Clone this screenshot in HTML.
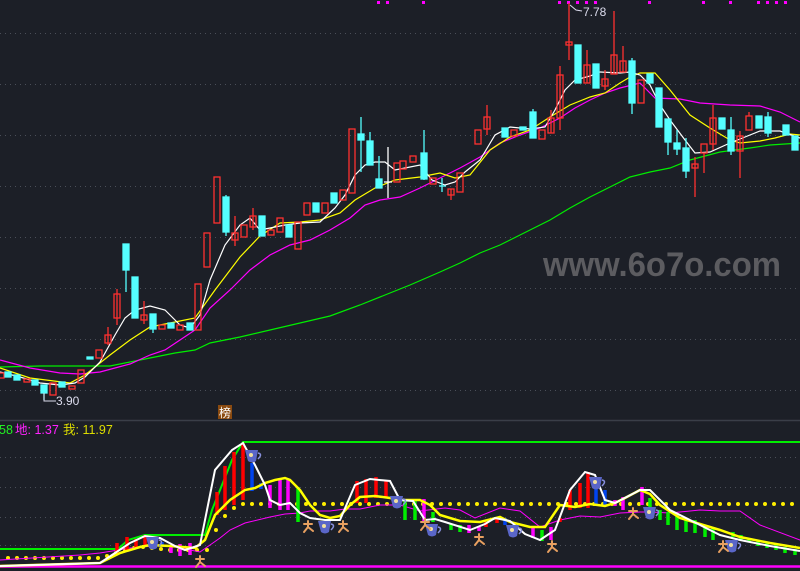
<!DOCTYPE html>
<html><head><meta charset="utf-8"><style>
html,body{margin:0;padding:0;background:#1c1f27;width:800px;height:571px;overflow:hidden}
svg{display:block}
text{font-family:"Liberation Sans","Noto Sans CJK SC",sans-serif}
</style></head><body>
<svg width="800" height="571" viewBox="0 0 800 571" xmlns="http://www.w3.org/2000/svg">
<rect width="800" height="571" fill="#1c1f27"/>
<g stroke="#4a4e58" stroke-width="1" stroke-dasharray="1,4">
<line x1="0" y1="33.5" x2="800" y2="33.5"/><line x1="0" y1="84.5" x2="800" y2="84.5"/>
<line x1="0" y1="135.5" x2="800" y2="135.5"/><line x1="0" y1="186.5" x2="800" y2="186.5"/>
<line x1="0" y1="237.5" x2="800" y2="237.5"/><line x1="0" y1="288.5" x2="800" y2="288.5"/>
<line x1="0" y1="339.5" x2="800" y2="339.5"/><line x1="0" y1="390.5" x2="800" y2="390.5"/>
<line x1="0" y1="457.5" x2="800" y2="457.5"/><line x1="0" y1="487.5" x2="800" y2="487.5"/>
<line x1="0" y1="517.5" x2="800" y2="517.5"/><line x1="0" y1="545.5" x2="800" y2="545.5"/>
</g>
<line x1="0" y1="420.5" x2="800" y2="420.5" stroke="#3a3e48" stroke-width="1.5"/>
<text x="543" y="276" font-size="34" font-weight="bold" fill="#5c5c60" textLength="238" lengthAdjust="spacingAndGlyphs">www.6o7o.com</text>
<g fill="#ff00ff">
<rect x="377" y="1" width="3" height="3"/><rect x="386" y="1" width="3" height="3"/><rect x="422" y="1" width="3" height="3"/>
<rect x="558" y="1" width="3" height="3"/><rect x="567" y="1" width="3" height="3"/><rect x="576" y="1" width="3" height="3"/><rect x="585" y="1" width="3" height="3"/><rect x="594" y="1" width="3" height="3"/>
<rect x="648" y="1" width="3" height="3"/><rect x="702" y="1" width="3" height="3"/><rect x="729" y="1" width="3" height="3"/>
<rect x="757" y="1" width="3" height="3"/><rect x="766" y="1" width="3" height="3"/><rect x="775" y="1" width="3" height="3"/><rect x="784" y="1" width="3" height="3"/>
</g>
<g fill="none" stroke-width="1.2">
<polyline stroke="#00ee00" points="0,367 40,366 90,366 110,366 130,362 150,358 175,353 195,350 210,343 240,337 270,330 300,323 330,316 360,305 385,295 410,285 440,272 460,263 480,253 500,245 520,235 550,220 570,208 590,197 610,187 630,177 650,172 670,168 690,160 720,152 750,148 770,145 800,143"/>
<polyline stroke="#ff00ff" points="0,360 30,368 60,373 80,374 100,372 115,368 130,364 150,355 165,350 180,340 195,330 210,308 230,290 250,270 270,255 290,245 310,240 330,230 350,218 365,205 380,200 400,197 420,188 440,178 460,168 480,157 500,143 520,135 540,128 560,118 575,108 590,100 605,93 620,88 640,83 655,98 680,99 700,103 730,105 760,106 780,112 800,122"/>
<polyline stroke="#ffff00" points="0,368 30,378 70,383 85,375 110,355 130,340 150,327 170,323 195,318 215,290 240,257 260,236 280,223 300,222 320,220 340,213 355,200 375,188 395,180 420,177 440,173 455,178 470,175 490,150 510,137 530,130 550,117 570,105 590,97 605,93 620,83 630,77 640,73 655,73 670,90 690,115 710,128 730,140 740,143 760,141 775,138 790,134 800,135"/>
<polyline stroke="#ffffff" points="0,372 20,377 40,383 60,385 75,383 85,377 100,362 115,335 125,318 135,310 150,306 165,310 180,325 190,328 200,315 210,280 225,245 240,225 250,218 260,230 270,228 285,225 300,223 320,222 335,208 345,195 355,175 365,165 375,162 385,162 395,170 405,168 420,165 432,180 445,185 455,182 465,172 480,160 495,135 510,127 530,129 545,127 555,110 565,90 575,80 590,76 600,72 620,73 630,72 640,75 650,85 660,105 670,120 685,140 695,153 710,152 730,143 745,137 760,131 780,131 800,138"/>
</g>
<g stroke-width="1.3">
<g stroke="#ff3030" fill="none">
<rect x="-2" y="373" width="6" height="5"/><rect x="24" y="379" width="6" height="3"/><rect x="50" y="383" width="6" height="12"/><rect x="69" y="386" width="6" height="3"/>
<rect x="78" y="370" width="6" height="13"/><rect x="96" y="350" width="6" height="8"/><rect x="105" y="335" width="6" height="8"/><line x1="108" y1="327" x2="108" y2="345"/>
<rect x="114" y="294" width="6" height="24"/><line x1="117" y1="289" x2="117" y2="325"/><rect x="141" y="315" width="6" height="5"/><line x1="144" y1="301" x2="144" y2="324"/>
<rect x="159" y="325" width="6" height="4"/><rect x="177" y="325" width="6" height="5"/><rect x="195" y="284" width="6" height="46"/><rect x="204" y="233" width="6" height="34"/>
<rect x="214" y="177" width="6" height="46"/><rect x="232" y="233" width="6" height="7"/><line x1="235" y1="216" x2="235" y2="246"/><rect x="241" y="225" width="6" height="12"/>
<rect x="250" y="216" width="6" height="11"/><line x1="253" y1="208" x2="253" y2="230"/><rect x="268" y="230" width="6" height="5"/><rect x="277" y="218" width="6" height="14"/>
<rect x="295" y="222" width="6" height="27"/><rect x="304" y="203" width="6" height="12"/><rect x="322" y="203" width="6" height="10"/><rect x="340" y="190" width="6" height="10"/>
<rect x="349" y="129" width="6" height="64"/><rect x="394" y="163" width="6" height="19"/><rect x="400" y="161" width="6" height="8"/><rect x="410" y="156" width="6" height="6"/>
<rect x="430" y="178" width="6" height="6"/><rect x="448" y="189" width="6" height="6"/><line x1="451" y1="189" x2="451" y2="200"/><rect x="457" y="173" width="6" height="19"/>
<rect x="475" y="130" width="6" height="14"/><rect x="484" y="117" width="6" height="12"/><line x1="487" y1="105" x2="487" y2="135"/><rect x="511" y="130" width="6" height="6"/>
<rect x="539" y="130" width="6" height="9"/><rect x="548" y="118" width="6" height="15"/><line x1="551" y1="110" x2="551" y2="133"/><rect x="557" y="75" width="6" height="43"/><line x1="560" y1="66" x2="560" y2="130"/>
<rect x="566" y="42" width="6" height="3"/><line x1="569" y1="3" x2="569" y2="60"/><rect x="584" y="65" width="6" height="18"/><line x1="587" y1="50" x2="587" y2="83"/>
<rect x="602" y="79" width="6" height="7"/><line x1="605" y1="70" x2="605" y2="90"/><rect x="611" y="55" width="6" height="19"/><line x1="614" y1="11" x2="614" y2="74"/>
<rect x="620" y="61" width="6" height="11"/><line x1="623" y1="46" x2="623" y2="72"/><rect x="638" y="80" width="6" height="23"/><rect x="692" y="164" width="6" height="4"/><line x1="695" y1="157" x2="695" y2="197"/>
<rect x="701" y="144" width="6" height="9"/><line x1="704" y1="153" x2="704" y2="173"/><rect x="710" y="118" width="6" height="26"/><line x1="713" y1="105" x2="713" y2="150"/>
<rect x="737" y="136" width="6" height="15"/><line x1="740" y1="131" x2="740" y2="178"/><rect x="746" y="116" width="6" height="14"/><line x1="749" y1="112" x2="749" y2="116"/>
</g>
<g fill="#55ffff" stroke="#55ffff">
<rect x="5" y="372" width="6" height="5"/><rect x="14" y="375" width="6" height="5"/><rect x="32" y="380" width="6" height="5"/><rect x="41" y="385" width="6" height="8"/><line x1="44" y1="385" x2="44" y2="400"/>
<rect x="59" y="382" width="6" height="5"/><rect x="87" y="357" width="6" height="2"/><rect x="123" y="244" width="6" height="26"/><line x1="126" y1="244" x2="126" y2="292"/>
<rect x="132" y="277" width="6" height="41"/><rect x="150" y="314" width="6" height="15"/><line x1="153" y1="314" x2="153" y2="333"/><rect x="168" y="323" width="6" height="5"/><rect x="187" y="323" width="6" height="7"/>
<rect x="223" y="197" width="6" height="35"/><line x1="226" y1="195" x2="226" y2="236"/><rect x="259" y="216" width="6" height="20"/><rect x="286" y="225" width="6" height="12"/>
<rect x="313" y="203" width="6" height="9"/><rect x="331" y="193" width="6" height="10"/><rect x="358" y="134" width="6" height="6"/><line x1="361" y1="117" x2="361" y2="172"/>
<rect x="367" y="141" width="6" height="24"/><line x1="370" y1="132" x2="370" y2="165"/><rect x="376" y="179" width="6" height="9"/><line x1="379" y1="156" x2="379" y2="188"/>
<rect x="421" y="153" width="6" height="26"/><line x1="424" y1="130" x2="424" y2="180"/><line x1="439" y1="186" x2="446" y2="186"/><line x1="442" y1="178" x2="442" y2="192"/>
<rect x="502" y="128" width="6" height="9"/><rect x="520" y="127" width="6" height="3"/><rect x="530" y="112" width="6" height="26"/><line x1="533" y1="109" x2="533" y2="138"/>
<rect x="575" y="45" width="6" height="38"/><rect x="593" y="64" width="6" height="24"/><rect x="629" y="61" width="6" height="42"/><line x1="632" y1="58" x2="632" y2="114"/>
<rect x="647" y="74" width="6" height="9"/><rect x="656" y="88" width="6" height="39"/><rect x="665" y="119" width="6" height="23"/><line x1="668" y1="142" x2="668" y2="155"/>
<rect x="674" y="143" width="6" height="6"/><line x1="677" y1="130" x2="677" y2="155"/><rect x="683" y="148" width="6" height="23"/><line x1="686" y1="138" x2="686" y2="178"/>
<rect x="719" y="118" width="6" height="11"/><rect x="728" y="130" width="6" height="21"/><line x1="731" y1="117" x2="731" y2="155"/><rect x="756" y="116" width="6" height="12"/>
<rect x="765" y="117" width="6" height="16"/><line x1="768" y1="112" x2="768" y2="137"/><rect x="783" y="125" width="6" height="10"/><rect x="792" y="136" width="6" height="14"/>
</g>
<line x1="388" y1="147" x2="388" y2="198" stroke="#fff"/><line x1="384" y1="182" x2="392" y2="182" stroke="#fff"/>
</g>
<g fill="#dde" font-size="12">
<path d="M44,393 L44,401 L56,401" stroke="#dde" fill="none"/>
<text x="56" y="405">3.90</text>
<path d="M570,5 L576,10 L582,11" stroke="#dde" fill="none"/>
<text x="583" y="16">7.78</text>
</g>
<rect x="218" y="405" width="14" height="14" fill="#8a4a10"/>
<text x="219" y="417" font-size="12" fill="#fff">榜</text>
<text x="-1" y="434" font-size="12.5" fill="#22ee22">58</text>
<text x="15" y="434" font-size="12.5" fill="#ff22ff">地: 1.37</text>
<text x="63" y="434" font-size="12.5" fill="#dddd00">我: 11.97</text>
<line x1="0" y1="566.5" x2="800" y2="566.5" stroke="#ff00ff" stroke-width="2.5"/>
<polyline fill="none" stroke="#00ee00" stroke-width="2" points="0,549 118,549 128,540 145,535 205,535 212,510 222,485 232,460 243,442 800,442"/>
<g fill="#ffee00">
<circle cx="8" cy="558" r="2"/><circle cx="17" cy="558" r="2"/><circle cx="26" cy="558" r="2"/><circle cx="35" cy="558" r="2"/><circle cx="44" cy="558" r="2"/><circle cx="53" cy="558" r="2"/><circle cx="62" cy="558" r="2"/><circle cx="71" cy="558" r="2"/><circle cx="80" cy="558" r="2"/><circle cx="89" cy="558" r="2"/><circle cx="98" cy="558" r="2"/>
<circle cx="107" cy="556" r="2"/><circle cx="116" cy="553" r="2"/><circle cx="125" cy="550" r="2"/><circle cx="134" cy="548" r="2"/><circle cx="143" cy="547" r="2"/><circle cx="152" cy="548" r="2"/><circle cx="161" cy="549" r="2"/><circle cx="170" cy="550" r="2"/><circle cx="179" cy="550" r="2"/><circle cx="188" cy="550" r="2"/><circle cx="197" cy="550" r="2"/><circle cx="207" cy="550" r="2"/>
<circle cx="216" cy="530" r="2"/><circle cx="225" cy="516" r="2"/><circle cx="234" cy="508" r="2"/><circle cx="243" cy="504" r="2"/><circle cx="252" cy="504" r="2"/><circle cx="261" cy="504" r="2"/><circle cx="270" cy="504" r="2"/><circle cx="279" cy="504" r="2"/><circle cx="288" cy="504" r="2"/><circle cx="297" cy="504" r="2"/><circle cx="306" cy="504" r="2"/><circle cx="315" cy="504" r="2"/><circle cx="324" cy="504" r="2"/><circle cx="333" cy="504" r="2"/><circle cx="342" cy="504" r="2"/><circle cx="351" cy="504" r="2"/><circle cx="360" cy="504" r="2"/><circle cx="369" cy="504" r="2"/><circle cx="378" cy="504" r="2"/><circle cx="387" cy="504" r="2"/><circle cx="396" cy="504" r="2"/>
<circle cx="405" cy="504" r="2"/><circle cx="414" cy="504" r="2"/><circle cx="423" cy="504" r="2"/><circle cx="432" cy="504" r="2"/><circle cx="441" cy="504" r="2"/><circle cx="450" cy="504" r="2"/><circle cx="459" cy="504" r="2"/><circle cx="468" cy="504" r="2"/><circle cx="477" cy="504" r="2"/><circle cx="486" cy="504" r="2"/><circle cx="495" cy="504" r="2"/><circle cx="504" cy="504" r="2"/><circle cx="513" cy="504" r="2"/><circle cx="522" cy="504" r="2"/><circle cx="531" cy="504" r="2"/><circle cx="540" cy="504" r="2"/><circle cx="549" cy="504" r="2"/><circle cx="558" cy="504" r="2"/><circle cx="567" cy="504" r="2"/><circle cx="576" cy="504" r="2"/><circle cx="585" cy="504" r="2"/><circle cx="594" cy="504" r="2"/><circle cx="603" cy="504" r="2"/><circle cx="612" cy="504" r="2"/><circle cx="621" cy="504" r="2"/><circle cx="630" cy="504" r="2"/><circle cx="639" cy="504" r="2"/><circle cx="648" cy="504" r="2"/><circle cx="657" cy="504" r="2"/><circle cx="666" cy="504" r="2"/><circle cx="675" cy="504" r="2"/><circle cx="684" cy="504" r="2"/><circle cx="693" cy="504" r="2"/><circle cx="702" cy="504" r="2"/><circle cx="711" cy="504" r="2"/><circle cx="720" cy="504" r="2"/><circle cx="729" cy="504" r="2"/><circle cx="738" cy="504" r="2"/><circle cx="747" cy="504" r="2"/><circle cx="756" cy="504" r="2"/><circle cx="765" cy="504" r="2"/><circle cx="774" cy="504" r="2"/><circle cx="783" cy="504" r="2"/><circle cx="792" cy="504" r="2"/>
</g>
<polyline fill="none" stroke="#ff00ff" stroke-width="1" points="0,560 80,555 100,553 130,548 165,545 200,552 220,538 230,530 245,523 270,517 285,514 300,513 310,511 330,511 345,509 360,509 380,505 400,505 420,511 445,508 460,510 475,518 500,508 520,511 540,527 560,520 580,516 600,517 620,513 640,512 650,512 670,513 700,510 720,511 740,511 760,525 800,540"/>
<g stroke-width="3.5">
<g stroke="#ff0000">
<line x1="117" y1="543" x2="117" y2="553"/><line x1="127" y1="537" x2="127" y2="551"/><line x1="136" y1="539" x2="136" y2="549"/><line x1="145" y1="535" x2="145" y2="546"/>
<line x1="217" y1="492" x2="217" y2="515"/><line x1="225" y1="466" x2="225" y2="510"/><line x1="234" y1="452" x2="234" y2="505"/><line x1="243" y1="443" x2="243" y2="500"/>
<line x1="357" y1="481" x2="357" y2="503"/><line x1="366" y1="479" x2="366" y2="503"/><line x1="376" y1="477" x2="376" y2="498"/><line x1="386" y1="480" x2="386" y2="497"/>
<line x1="486" y1="522" x2="486" y2="527"/><line x1="497" y1="518" x2="497" y2="523"/><line x1="560" y1="518" x2="560" y2="522"/>
<line x1="570" y1="490" x2="570" y2="510"/><line x1="580" y1="483" x2="580" y2="508"/><line x1="588" y1="472" x2="588" y2="508"/>
</g>
<g stroke="#0044ee">
<line x1="252" y1="463" x2="252" y2="491"/><line x1="261" y1="483" x2="261" y2="489"/><line x1="505" y1="518" x2="505" y2="525"/><line x1="596" y1="488" x2="596" y2="505"/><line x1="605" y1="490" x2="605" y2="505"/><line x1="162" y1="542" x2="162" y2="547"/>
</g>
<g stroke="#ff00ff">
<line x1="171" y1="545" x2="171" y2="553"/><line x1="180" y1="544" x2="180" y2="556"/><line x1="190" y1="543" x2="190" y2="555"/>
<line x1="270" y1="485" x2="270" y2="508"/><line x1="280" y1="480" x2="280" y2="510"/><line x1="288" y1="480" x2="288" y2="510"/>
<line x1="424" y1="499" x2="424" y2="522"/><line x1="469" y1="525" x2="469" y2="533"/><line x1="479" y1="527" x2="479" y2="531"/><line x1="533" y1="527" x2="533" y2="538"/><line x1="551" y1="527" x2="551" y2="540"/>
<line x1="615" y1="500" x2="615" y2="506"/><line x1="623" y1="497" x2="623" y2="510"/><line x1="642" y1="487" x2="642" y2="505"/>
</g>
<g stroke="#00ee00">
<line x1="298" y1="487" x2="298" y2="522"/><line x1="405" y1="499" x2="405" y2="520"/><line x1="415" y1="499" x2="415" y2="520"/><line x1="433" y1="512" x2="433" y2="522"/><line x1="451" y1="524" x2="451" y2="530"/><line x1="460" y1="525" x2="460" y2="532"/><line x1="542" y1="530" x2="542" y2="541"/>
<line x1="650" y1="498" x2="650" y2="507"/><line x1="660" y1="510" x2="660" y2="520"/><line x1="668" y1="512" x2="668" y2="525"/><line x1="677" y1="515" x2="677" y2="530"/><line x1="686" y1="518" x2="686" y2="532"/><line x1="695" y1="520" x2="695" y2="533"/><line x1="705" y1="525" x2="705" y2="537"/><line x1="713" y1="527" x2="713" y2="540"/><line x1="733" y1="532" x2="733" y2="537"/><line x1="741" y1="535" x2="741" y2="540"/><line x1="749" y1="538" x2="749" y2="542"/><line x1="758" y1="540" x2="758" y2="546"/><line x1="767" y1="542" x2="767" y2="548"/><line x1="776" y1="545" x2="776" y2="550"/><line x1="785" y1="547" x2="785" y2="553"/><line x1="795" y1="549" x2="795" y2="555"/>
</g>
</g>
<polyline fill="none" stroke="#ffff00" stroke-width="2.5" points="0,566 100,563 120,553 140,547 150,545 170,546 195,548 205,540 215,515 230,500 245,490 255,488 265,483 275,480 285,478 290,480 300,490 310,505 320,515 330,518 340,516 350,505 360,497 375,496 390,498 400,500 420,500 430,505 440,515 460,521 480,522 500,517 510,522 530,527 545,527 560,505 575,507 590,504 605,506 615,503 625,498 640,490 650,494 660,505 680,518 700,524 720,530 740,537 770,543 800,548"/>
<polyline fill="none" stroke="#ffffff" stroke-width="2" points="0,566 100,563 115,553 130,543 145,536 160,538 175,546 185,550 200,545 215,470 232,450 243,443 255,465 265,485 270,500 280,505 290,503 300,513 310,518 325,520 340,520 355,485 370,479 390,481 400,500 413,501 425,520 435,519 445,522 470,530 485,524 495,518 510,521 525,534 540,540 555,530 570,490 585,472 595,475 605,500 615,503 640,490 650,490 660,500 670,510 700,525 720,535 740,540 770,546 800,551"/>
<g>
<g transform="translate(252,456)"><path d="M-7,-6 H6 L4,5 Q0,8 -4,5 Z" fill="#5a66c8"/><path d="M6,-3 Q11,-2 6,3" stroke="#8890dd" fill="none" stroke-width="1.5"/><circle cx="-1" cy="-1" r="2" fill="#f0e0a0"/></g>
<g transform="translate(153,543)"><path d="M-7,-6 H6 L4,5 Q0,8 -4,5 Z" fill="#5a66c8"/><path d="M6,-3 Q11,-2 6,3" stroke="#8890dd" fill="none" stroke-width="1.5"/><circle cx="-1" cy="-1" r="2" fill="#f0e0a0"/></g>
<g transform="translate(325,527)"><path d="M-7,-6 H6 L4,5 Q0,8 -4,5 Z" fill="#5a66c8"/><path d="M6,-3 Q11,-2 6,3" stroke="#8890dd" fill="none" stroke-width="1.5"/><circle cx="-1" cy="-1" r="2" fill="#f0e0a0"/></g>
<g transform="translate(397,502)"><path d="M-7,-6 H6 L4,5 Q0,8 -4,5 Z" fill="#5a66c8"/><path d="M6,-3 Q11,-2 6,3" stroke="#8890dd" fill="none" stroke-width="1.5"/><circle cx="-1" cy="-1" r="2" fill="#f0e0a0"/></g>
<g transform="translate(432,530)"><path d="M-7,-6 H6 L4,5 Q0,8 -4,5 Z" fill="#5a66c8"/><path d="M6,-3 Q11,-2 6,3" stroke="#8890dd" fill="none" stroke-width="1.5"/><circle cx="-1" cy="-1" r="2" fill="#f0e0a0"/></g>
<g transform="translate(513,531)"><path d="M-7,-6 H6 L4,5 Q0,8 -4,5 Z" fill="#5a66c8"/><path d="M6,-3 Q11,-2 6,3" stroke="#8890dd" fill="none" stroke-width="1.5"/><circle cx="-1" cy="-1" r="2" fill="#f0e0a0"/></g>
<g transform="translate(596,483)"><path d="M-7,-6 H6 L4,5 Q0,8 -4,5 Z" fill="#5a66c8"/><path d="M6,-3 Q11,-2 6,3" stroke="#8890dd" fill="none" stroke-width="1.5"/><circle cx="-1" cy="-1" r="2" fill="#f0e0a0"/></g>
<g transform="translate(650,513)"><path d="M-7,-6 H6 L4,5 Q0,8 -4,5 Z" fill="#5a66c8"/><path d="M6,-3 Q11,-2 6,3" stroke="#8890dd" fill="none" stroke-width="1.5"/><circle cx="-1" cy="-1" r="2" fill="#f0e0a0"/></g>
<g transform="translate(732,546)"><path d="M-7,-6 H6 L4,5 Q0,8 -4,5 Z" fill="#5a66c8"/><path d="M6,-3 Q11,-2 6,3" stroke="#8890dd" fill="none" stroke-width="1.5"/><circle cx="-1" cy="-1" r="2" fill="#f0e0a0"/></g>
</g>
<g stroke="#e8a060" stroke-width="2" fill="none" stroke-linecap="round">
<path d="M200,556 V562 M196,559 H204 M200,562 L196,567 M200,562 L205,566"/>
<path d="M308,521 V527 M304,524 H312 M308,527 L304,532 M308,527 L313,531"/>
<path d="M343,521 V527 M339,524 H347 M343,527 L339,532 M343,527 L348,531"/>
<path d="M425,519 V525 M421,522 H429 M425,525 L421,530 M425,525 L430,529"/>
<path d="M479,534 V540 M475,537 H483 M479,540 L475,545 M479,540 L484,544"/>
<path d="M552,541 V547 M548,544 H556 M552,547 L548,552 M552,547 L557,551"/>
<path d="M633,508 V514 M629,511 H637 M633,514 L629,519 M633,514 L638,518"/>
<path d="M723,541 V547 M719,544 H727 M723,547 L719,552 M723,547 L728,551"/>
</g>
</svg>
</body></html>
